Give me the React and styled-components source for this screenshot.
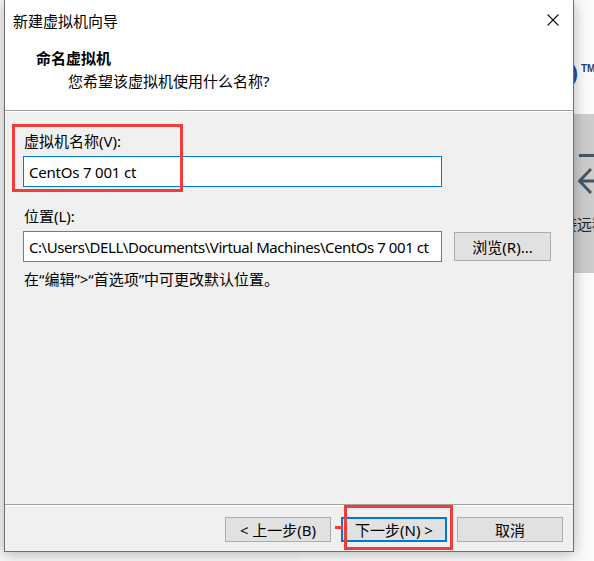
import React from "react";
import styled, { createGlobalStyle } from "styled-components";

const Global = createGlobalStyle`
  html, body { margin: 0; padding: 0; background: #ffffff; }
  body { font-family: "Noto Sans", "Noto Sans CJK SC", sans-serif; font-size: 15px; color: #000; }
  * { box-sizing: border-box; }
`;

const Desktop = styled.div`
  position: relative;
  width: 594px;
  height: 561px;
  overflow: hidden;
  background: #f7f7f7;
`;

/* application window behind the dialog */
const BackWindow = styled.div`
  position: absolute;
  left: 300px;
  top: 0;
  width: 400px;
  height: 561px;
  background: #fbfbfb;
  display: flex;
  flex-direction: column;
`;

const LogoRow = styled.div`
  height: 114px;
  display: flex;
  align-items: flex-start;
  padding-top: 61px;
  padding-left: 271px;
  color: #1f4d9b;
  font-family: "Liberation Sans", sans-serif;
  font-weight: bold;
`;

const LogoParen = styled.span`
  font-size: 21px;
  line-height: 24px;
`;

const Tm = styled.span`
  font-size: 10px;
  line-height: 10px;
  margin-left: 3px;
  margin-top: 3px;
  color: #1f3f7a;
`;

const SidePanel = styled.div`
  height: 159px;
  background: linear-gradient(90deg, #c2c2c2 0px, #cccccc 290px, #d0d0d0 100%);
  display: flex;
  flex-direction: column;
  padding-left: 278px;
  padding-top: 26px;
  color: #475664;
`;

const PanelText = styled.div`
  margin-left: -31px;
  margin-top: 18px;
  font-size: 15px;
  line-height: 20px;
  color: #222;
  white-space: nowrap;
`;

const Dialog = styled.div`
  position: absolute;
  left: 4px;
  top: 0;
  width: 570px;
  height: 552px;
  background: #f0f0f0;
  border: 1px solid #6f6f6f;
  border-top: none;
  box-shadow: 0 2px 14px rgba(0, 0, 0, 0.28);
  display: flex;
  flex-direction: column;
`;

const TitleBar = styled.div`
  height: 42px;
  background: #fff;
  display: flex;
  align-items: center;
  justify-content: space-between;
  padding: 0 14px 2px 8px;
  font-size: 15px;
`;

const CloseButton = styled.div`
  width: 12px;
  height: 12px;
  display: flex;
`;

const Header = styled.div`
  height: 69px;
  background: #fff;
  padding: 5px 0 0 31px;
  border-bottom: 1px solid #a0a0a0;
`;

const HeaderTitle = styled.div`
  font-weight: bold;
  font-size: 15px;
  line-height: 22px;
`;

const HeaderSub = styled.div`
  margin-top: 1px;
  padding-left: 32px;
  font-size: 15px;
  line-height: 22px;
`;

const Body = styled.div`
  flex: 1;
  padding: 19px 0 0 18px;
  display: flex;
  flex-direction: column;
  border-top: 1px solid #fff;
`;

const FieldGroup = styled.div`
  position: relative;
  display: flex;
  flex-direction: column;
  gap: 5px;
  margin-top: ${(p) => p.$top || 0}px;
`;

const Label = styled.div`
  padding-left: 1px;
  line-height: 20px;
  font-size: 15px;
`;

const Row = styled.div`
  display: flex;
  align-items: center;
  gap: 12px;
`;

const TextBox = styled.div`
  width: 419px;
  height: 31px;
  background: #fff;
  border: 1px solid ${(p) => (p.$focused ? "#0078d7" : "#7a7a7a")};
  display: flex;
  align-items: center;
  padding-left: 5px;
  font-size: 15px;
  letter-spacing: ${(p) => (p.$tight ? "-0.45px" : "-0.2px")};
  white-space: nowrap;
  overflow: hidden;
`;

const Button = styled.div`
  width: ${(p) => p.$w || 106}px;
  height: ${(p) => p.$h || 25}px;
  background: #e1e1e1;
  border: ${(p) => (p.$default ? "2px solid #0078d7" : "1px solid #adadad")};
  display: flex;
  align-items: center;
  justify-content: center;
  font-size: 15px;
  white-space: nowrap;
`;

const Hint = styled.div`
  margin-top: 7px;
  padding-left: 1px;
  line-height: 20px;
  font-size: 15px;
`;

const Footer = styled.div`
  border-top: 1px solid #a0a0a0;
  box-shadow: inset 0 1px 0 #fff;
  padding: 12px 10px 9px 0;
  display: flex;
  justify-content: flex-end;
  gap: 10px;
`;

const Mark = styled.div`
  position: absolute;
  border: 3px solid #f23b3b;
  pointer-events: none;
`;

const MarkBox = styled(Mark)`
  left: -11px;
  top: -7px;
  width: 171px;
  height: 68px;
`;

const ButtonSlot = styled.div`
  position: relative;
  display: flex;
`;

const NextMark = styled(Mark)`
  left: 3px;
  top: -12px;
  width: 109px;
  height: 45px;
`;

const Connector = styled.div`
  position: absolute;
  left: -6px;
  top: 9px;
  width: 8px;
  height: 3px;
  background: #f23b3b;
`;

export default function App() {
  return (
    <>
      <Global />
      <Desktop>
        <BackWindow>
          <LogoRow>
            <LogoParen>)</LogoParen>
            <Tm>TM</Tm>
          </LogoRow>
          <SidePanel>
            <svg width="18" height="56" viewBox="0 0 18 56">
              <rect x="1" y="14" width="17" height="3" fill="#475664" />
              <path d="M13 29 L1.5 41 L13 53 M1.5 41 H18" stroke="#475664" strokeWidth="3" fill="none" />
            </svg>
            <PanelText>连接远程服务器</PanelText>
          </SidePanel>
        </BackWindow>

        <Dialog>
          <TitleBar>
            <span>新建虚拟机向导</span>
            <CloseButton>
              <svg width="12" height="12" viewBox="0 0 12 12">
                <path d="M0.5 0.5 L11.5 11.5 M11.5 0.5 L0.5 11.5" stroke="#111" strokeWidth="1.1" />
              </svg>
            </CloseButton>
          </TitleBar>
          <Header>
            <HeaderTitle>命名虚拟机</HeaderTitle>
            <HeaderSub>您希望该虚拟机使用什么名称?</HeaderSub>
          </Header>
          <Body>
            <FieldGroup>
              <Label>虚拟机名称(V):</Label>
              <TextBox $focused>CentOs 7 001 ct</TextBox>
              <MarkBox />
            </FieldGroup>
            <FieldGroup $top={19}>
              <Label>位置(L):</Label>
              <Row>
                <TextBox $tight>C:\Users\DELL\Documents\Virtual Machines\CentOs 7 001 ct</TextBox>
                <Button $w={97} $h={29}>浏览(R)...</Button>
              </Row>
            </FieldGroup>
            <Hint>在“编辑”&gt;“首选项”中可更改默认位置。</Hint>
          </Body>
          <Footer>
            <Button>&lt; 上一步(B)</Button>
            <ButtonSlot>
              <Button $default>下一步(N) &gt;</Button>
              <NextMark />
              <Connector />
            </ButtonSlot>
            <Button>取消</Button>
          </Footer>
        </Dialog>
      </Desktop>
    </>
  );
}
